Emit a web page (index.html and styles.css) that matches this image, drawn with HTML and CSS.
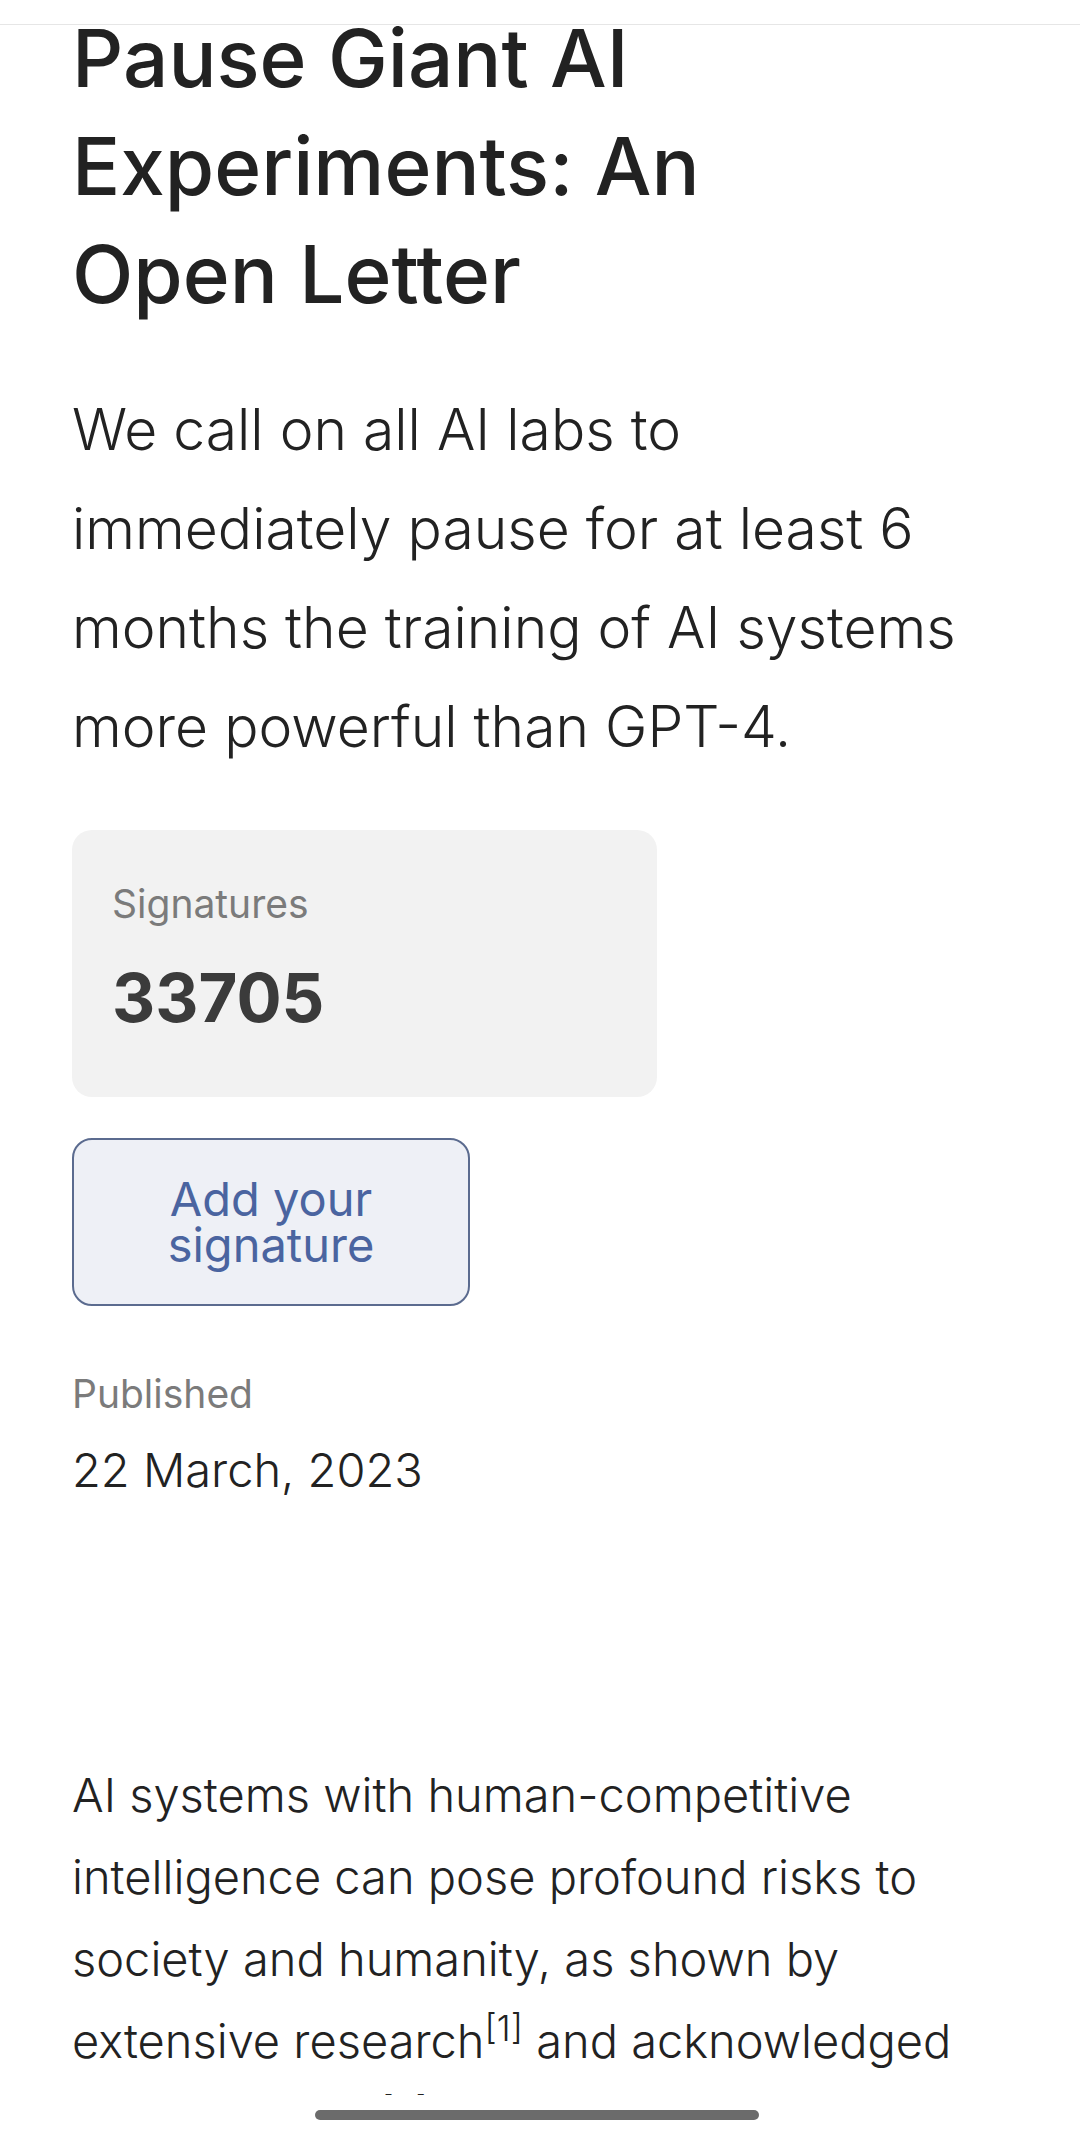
FILE: index.html
```html
<!DOCTYPE html>
<html lang="en">
<head>
<meta charset="utf-8">
<title>Pause Giant AI Experiments: An Open Letter</title>
<link rel="stylesheet" href="styles.css">
</head>
<body>
<header class="topbar"></header>
<main class="page">
  <h1 class="title">Pause Giant AI Experiments: An Open Letter</h1>
  <p class="lead">We call on all AI labs to immediately pause for at least 6 months the training of AI systems more powerful than GPT-4.</p>
  <section class="stat-card">
    <div class="stat-label">Signatures</div>
    <div class="stat-value">33705</div>
  </section>
  <a class="sign-btn" href="#sign">Add your signature</a>
  <div class="meta">
    <div class="meta-label">Published</div>
    <div class="meta-value">22 March, 2023</div>
  </div>
  <p class="body-text">AI systems with human-competitive intelligence can pose profound risks to society and humanity, as shown by extensive research<sup>[1]</sup> and acknowledged by top AI labs.<sup>[2]</sup> As stated in the widely-endorsed Asilomar AI Principles, Advanced AI could represent a profound change in the history of life on Earth.</p>
</main>
<footer class="navbar"><span class="home-bar"></span></footer>
</body>
</html>
```

FILE: styles.css
```css
html, body {
  margin: 0;
  padding: 0;
  background: #ffffff;
}
body {
  font-family: Inter, "Noto Sans", "Liberation Sans", sans-serif;
  color: #222222;
}
.topbar {
  position: fixed;
  top: 0;
  left: 0;
  right: 0;
  height: 24px;
  background: #ffffff;
  border-bottom: 1px solid #e6e6e6;
  z-index: 5;
}
.page {
  padding: 4px 72px 0;
}
.title {
  margin: 0;
  max-width: 740px;
  font-size: 80px;
  line-height: 108px;
  font-weight: 500;
  color: #222222;
}
.lead {
  margin: 52px 0 0;
  max-width: 905px;
  font-size: 57px;
  line-height: 99px;
  font-weight: 300;
  color: #222222;
}
.stat-card {
  margin-top: 54px;
  width: 585px;
  height: 267px;
  box-sizing: border-box;
  padding: 50px 40px 0;
  background: #f2f2f2;
  border-radius: 20px;
  display: flex;
  flex-direction: column;
  gap: 30px;
}
.stat-label {
  font-size: 39px;
  line-height: 48px;
  font-weight: 400;
  color: #7b7b7b;
}
.stat-value {
  font-size: 67px;
  line-height: 80px;
  font-weight: 700;
  color: #3b3b3b;
}
.sign-btn {
  margin-top: 41px;
  width: 398px;
  height: 168px;
  box-sizing: border-box;
  padding: 0 40px;
  display: flex;
  align-items: center;
  justify-content: center;
  text-align: center;
  text-decoration: none;
  background: #eef0f6;
  border: 2px solid #5b6b8f;
  border-radius: 20px;
  font-size: 47px;
  line-height: 46px;
  font-weight: 400;
  color: #4a64a0;
}
.meta {
  margin-top: 64px;
  display: flex;
  flex-direction: column;
  gap: 22px;
}
.meta-label {
  font-size: 39px;
  line-height: 48px;
  color: #7b7b7b;
}
.meta-value {
  font-size: 47px;
  line-height: 60px;
  font-weight: 300;
  color: #222222;
}
.body-text {
  margin: 254px 0 0;
  max-width: 905px;
  font-size: 47px;
  line-height: 82px;
  font-weight: 300;
  color: #222222;
}
.body-text sup {
  font-size: 0.75em;
  line-height: 0;
}
.navbar {
  position: fixed;
  left: 0;
  right: 0;
  bottom: 0;
  height: 45px;
  background: #ffffff;
  z-index: 5;
}
.home-bar {
  position: absolute;
  left: 315px;
  top: 15px;
  width: 444px;
  height: 10px;
  border-radius: 5px;
  background: #6b6b6b;
}
```
